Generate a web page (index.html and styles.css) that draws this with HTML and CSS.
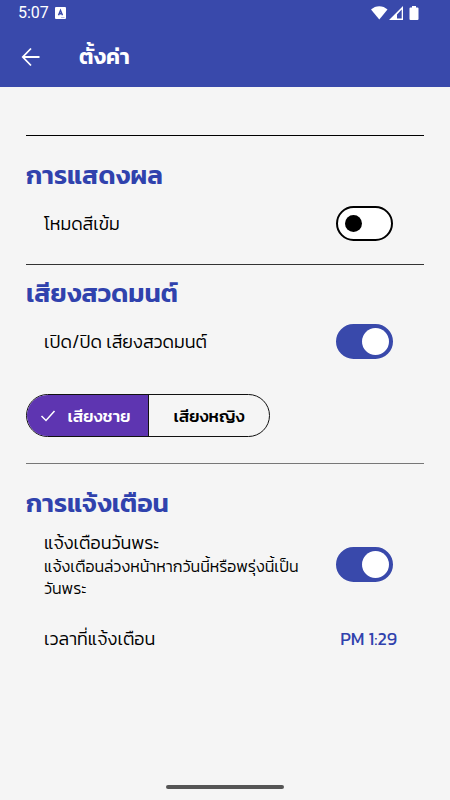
FILE: index.html
```html
<!DOCTYPE html>
<html lang="th">
<head>
<meta charset="utf-8">
<meta name="viewport" content="width=device-width, initial-scale=1">
<title>ตั้งค่า</title>
<link rel="stylesheet" href="styles.css">
</head>
<body>
<header class="top">
  <div class="status">
    <span class="clock">5:07</span>
    <svg class="badge" width="12" height="12" viewBox="0 0 12 12" aria-hidden="true"><rect x="0" y="0" width="11" height="12" rx="1" fill="#fff"/><path d="M3.500 8.300 5.500 3.300 7.500 8.300M4.200 6.700h2.600" fill="none" stroke="#3949ab" stroke-width="1.400"/><path d="M6 10.500h3.500" stroke="#9aa4dc" stroke-width=".7"/></svg>
    <svg class="signals" width="50" height="16" viewBox="0 0 50 16" aria-hidden="true"><path d="M0 4.500C4.500 0 12 0 16.500 4.500L8.300 14.500Z" fill="#fff"/><path fill-rule="evenodd" d="M18 15 32 1V15ZM26 13.500H30.700V4.500L26 9.500Z" fill="#fff"/><path d="M41 1h4v1.500h1.500q1 0 1 1V14q0 1-1 1h-7q-1 0-1-1V3.500q0-1 1-1H41Z" fill="#fff"/></svg>
  </div>
  <div class="appbar">
    <button class="back" type="button" aria-label="ย้อนกลับ"><svg width="20" height="20" viewBox="0 0 20 20" aria-hidden="true"><path d="M18.500 10H2M10 1.500 1.800 10 10 18.500" fill="none" stroke="#fff" stroke-width="1.800"/></svg></button>
    <h1>ตั้งค่า</h1>
  </div>
</header>
<main>
  <section class="display">
    <h2>การแสดงผล</h2>
    <div class="row">
      <label for="dark">โหมดสีเข้ม</label>
      <input class="switch" id="dark" type="checkbox" role="switch">
    </div>
  </section>
  <section>
    <h2>เสียงสวดมนต์</h2>
    <div class="row">
      <label for="sound">เปิด/ปิด เสียงสวดมนต์</label>
      <input class="switch" id="sound" type="checkbox" role="switch" checked>
    </div>
    <div class="segments">
      <button class="segment selected" type="button" aria-pressed="true"><svg width="16" height="14" viewBox="0 0 16 14" aria-hidden="true"><path d="M1.500 7 6 11.500 14.500 2" fill="none" stroke="#fff" stroke-width="1.500"/></svg>เสียงชาย</button>
      <button class="segment" type="button" aria-pressed="false">เสียงหญิง</button>
    </div>
  </section>
  <section class="alerts">
    <h2>การแจ้งเตือน</h2>
    <div class="row tall">
      <label for="holy">แจ้งเตือนวันพระ<small>แจ้งเตือนล่วงหน้าหากวันนี้หรือพรุ่งนี้เป็น<br>วันพระ</small></label>
      <input class="switch" id="holy" type="checkbox" role="switch" checked>
    </div>
    <div class="row">
      <span>เวลาที่แจ้งเตือน</span>
      <button class="time" type="button">PM 1:29</button>
    </div>
  </section>
</main>
<footer><div class="handle"></div></footer>
</body>
</html>
```
FILE: styles.css
```css
* { box-sizing: border-box; }
body {
  margin: 0;
  min-height: 100vh;
  display: flex;
  flex-direction: column;
  background: #f5f5f5;
  color: #000;
  font-family: Kanit, Prompt, "Noto Sans Thai", "Noto Sans", sans-serif;
  font-size: 18px;
  font-weight: 300;
}
button { font: inherit; border: 0; background: none; padding: 0; color: inherit; }
svg { display: block; flex: none; }
.top { background: #3949ab; color: #fff; }
.status { height: 27px; padding: 0 29px 1px 18px; display: flex; align-items: center; }
.clock { font: 16px/26px Roboto, sans-serif; }
.badge { margin-left: 6px; }
.signals { margin-left: auto; }
.appbar { height: 60px; padding: 0 21px; display: flex; align-items: center; gap: 38px; }
h1 { margin: 0; font-size: 22px; line-height: 32px; font-weight: 600; }
main { flex: 1; padding: 48px 26px 0; }
section { border-top: 1px solid #333; padding: 10px 0; }
.display { padding: 21px 0 11px; border-color: #000; }
.alerts { padding-top: 21px; border-color: #777; }
h2 { margin: 0; color: #3042ad; font-size: 26px; line-height: 36px; font-weight: 600; }
.row { min-height: 60px; padding: 0 27px 0 18px; display: flex; align-items: center; justify-content: space-between; }
.tall { min-height: 87px; }
.row label { line-height: 25px; }
small { display: block; font-size: 16px; line-height: 22px; white-space: nowrap; }
.switch {
  appearance: none;
  flex: none;
  width: 57px;
  height: 35px;
  margin: 0 4px 0 0;
  padding: 0 7px;
  border: 2px solid #000;
  border-radius: 18px;
  background: #fff;
  display: flex;
  align-items: center;
}
.switch::before { content: ""; width: 17px; height: 17px; border-radius: 50%; background: #000; }
.switch:checked { background: #3949ab; border-color: #3949ab; justify-content: flex-end; padding: 0 2px; }
.switch:checked::before { width: 27px; height: 27px; background: #fff; }
.segments { width: fit-content; height: 43px; margin: 23px 0 16px; display: flex; border: 1px solid #111; border-radius: 22px; overflow: hidden; }
.segment { width: 120px; display: flex; align-items: center; justify-content: center; gap: 11px; font-size: 17px; font-weight: 500; }
.selected { width: 122px; padding-right: 4px; background: #5e35b1; color: #fff; border-right: 1px solid #111; }
.time { color: #3042ad; font-weight: 400; }
footer { padding: 0 0 11px; }
.handle { width: 118px; height: 4px; margin: 0 auto; border-radius: 2px; background: #555; }
```
